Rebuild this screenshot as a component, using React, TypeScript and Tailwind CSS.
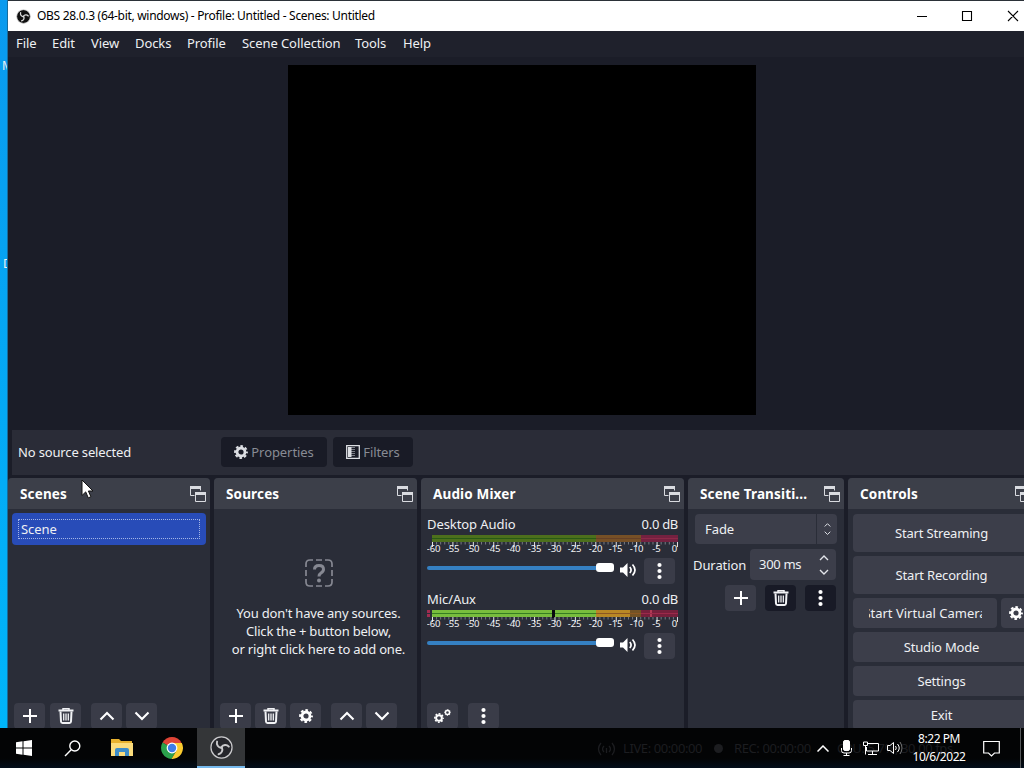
import type { ReactNode } from 'react';

const menuItems = [
  { label: 'File', className: 'w-9' },
  { label: 'Edit', className: 'w-[39px]' },
  { label: 'View', className: 'w-11' },
  { label: 'Docks', className: 'w-[52px]' },
  { label: 'Profile', className: 'w-[55px]' },
  { label: 'Scene Collection', className: 'w-[113px]' },
  { label: 'Tools', className: 'w-12' },
  { label: 'Help', className: 'w-10' },
];

const meterLabels = [
  { text: '-60', x: 6.5 },
  { text: '-55', x: 25.5 },
  { text: '-50', x: 45.5 },
  { text: '-45', x: 66.5 },
  { text: '-40', x: 86.5 },
  { text: '-35', x: 107.5 },
  { text: '-30', x: 127.5 },
  { text: '-25', x: 147.5 },
  { text: '-20', x: 168.5 },
  { text: '-15', x: 188.5 },
  { text: '-10', x: 209.5 },
  { text: '-5', x: 229.5 },
  { text: '0', x: 247.5 },
];

function ObsLogo({ size, fill, stroke }: { size: number; fill: string; stroke: string }) {
  const arm = 'M12 12.500c-3.500-.6-5.600-3.400-4.600-6.700';
  return (
    <svg width={size} height={size} viewBox="0 0 24 24" fill="none" className="shrink-0">
      <circle cx="12" cy="12" r="11" fill={fill} stroke={stroke} strokeWidth="1.300" />
      <g stroke={stroke} strokeWidth="2" strokeLinecap="round">
        <path d={arm} />
        <path d={arm} transform="rotate(120 12 12)" />
        <path d={arm} transform="rotate(240 12 12)" />
      </g>
    </svg>
  );
}

function PopOutIcon() {
  return (
    <svg width="16" height="16" viewBox="0 0 16 16" fill="none" stroke="#d9dbe0" className="shrink-0">
      <path d="M4.500 9.500H.5v-9h10v4" />
      <path d="M0 1.500h11" strokeWidth="3" />
      <path d="M5.500 6.500h10v9h-10z" />
      <path d="M5 7.500h11" strokeWidth="3" />
    </svg>
  );
}

function PlusIcon() {
  return (
    <svg width="16" height="16" viewBox="0 0 16 16" stroke="#fff" strokeWidth="2">
      <path d="M8 1v14M1 8h14" />
    </svg>
  );
}

function TrashIcon() {
  return (
    <svg width="16" height="16" viewBox="0 0 16 16" fill="none" stroke="#f1f2f5">
      <path d="M.5 2.500h15" strokeWidth="2" />
      <path d="M5 2V.800h6V2" strokeWidth="1.500" />
      <path d="M2.500 3.500l.5 10q.1 1.500 1.500 1.500h7q1.400 0 1.500-1.500l.5-10" strokeWidth="2" />
      <path d="M5.700 5.500v7M8 5.500v7M10.300 5.500v7" strokeWidth="1.300" />
    </svg>
  );
}

function ChevronIcon({ down = false }: { down?: boolean }) {
  return (
    <svg width="16" height="16" viewBox="0 0 16 16" fill="none" stroke="#fff" strokeWidth="2.100">
      <path d={down ? 'M1.500 4.500L8 11l6.500-6.500' : 'M1.500 11.500L8 5l6.500 6.500'} />
    </svg>
  );
}

function SmallChevron({ size, down = false }: { size: number; down?: boolean }) {
  return (
    <svg width={size} height={size * 0.6} viewBox="0 0 10 6" fill="none" stroke="#e2e4e9" strokeWidth="1.400">
      <path d={down ? 'M1 1l4 4 4-4' : 'M1 5l4-4 4 4'} />
    </svg>
  );
}

function DotsIcon() {
  return (
    <svg width="5" height="18" viewBox="0 0 5 18" fill="#fff">
      <circle cx="2.500" cy="3" r="2.100" />
      <circle cx="2.500" cy="9" r="2.100" />
      <circle cx="2.500" cy="15" r="2.100" />
    </svg>
  );
}

function GearIcon({ size = 14, color = '#fff' }: { size?: number; color?: string }) {
  return (
    <svg width={size} height={size} viewBox="0 0 14 14" fill="none" stroke={color} className="shrink-0">
      <circle cx="7" cy="7" r="4" strokeWidth="2.800" />
      <circle cx="7" cy="7" r="5.900" strokeWidth="2" strokeDasharray="2.630 2" strokeDashoffset="1.300" />
    </svg>
  );
}

function SpeakerIcon() {
  return (
    <svg width="17" height="14" viewBox="0 0 17 14" fill="none" stroke="#fff" strokeWidth="1.700">
      <path d="M0 4.500h3L7.500 0v14L3 9.500H0z" fill="#fff" stroke="none" />
      <path d="M9.800 4q2.600 3 0 6M12.500 1.500q5 5.500 0 11" />
    </svg>
  );
}

function ToolButton({ children, dark = false }: { children: ReactNode; dark?: boolean }) {
  return (
    <button
      className={`flex h-[26px] w-[31px] shrink-0 items-center justify-center rounded ${dark ? 'bg-[#181a26]' : 'bg-[#3a3c48]'}`}
    >
      {children}
    </button>
  );
}

function Dock({ title, className, children }: { title: string; className: string; children: ReactNode }) {
  return (
    <section className={`flex h-[250px] shrink-0 flex-col overflow-hidden rounded-t bg-[#2a2d38] ${className}`}>
      <header className="flex h-[31px] shrink-0 items-center justify-between bg-[#3c3f49] pl-3 pr-1 text-[13.500px] font-bold tracking-[0.150px] text-white">
        <span className="whitespace-nowrap">{title}</span>
        <PopOutIcon />
      </header>
      {children}
    </section>
  );
}

function Meter({ active = false }: { active?: boolean }) {
  const ticks = Array.from({ length: 61 }, (_, i) => i);
  return (
    <svg width="253" height="21" viewBox="0 0 253 21" className="block">
      {active ? (
        <>
          <rect x="0" y="1" width="3" height="7" fill="#a02c50" />
          <path d="M0 4.500h3" stroke="#2a2d38" />
          <rect x="5" y="1" width="164" height="7" fill="#78bd3d" />
          <rect x="169" y="1" width="34" height="7" fill="#b98825" />
          <rect x="203" y="1" width="11" height="7" fill="#735225" />
          <rect x="214" y="1" width="37" height="7" fill="#76203c" />
          <rect x="223" y="1" width="2" height="7" fill="#b13a55" />
          <path d="M5 4.500h164" stroke="#367d22" />
          <path d="M169 4.500h45" stroke="#8c5722" />
          <path d="M214 4.500h37" stroke="#9c294a" />
          <rect x="125" y="1" width="3" height="8" fill="#08090e" />
        </>
      ) : (
        <>
          <rect x="5" y="1" width="164" height="7" fill="#4d701c" />
          <rect x="169" y="1" width="45" height="7" fill="#775026" />
          <rect x="214" y="1" width="37" height="7" fill="#742140" />
          <path d="M5 4.500h164" stroke="#285b15" />
          <path d="M169 4.500h45" stroke="#664027" />
          <path d="M214 4.500h37" stroke="#8d2948" />
        </>
      )}
      {ticks.map((i) => {
        const x = 5.5 + i * 4.083;
        return (
          <path key={i} d={i % 5 === 0 ? `M${x} 8v5` : `M${x} 8v2.500`} stroke={i % 5 === 0 ? '#e0e2e6' : '#777a83'} />
        );
      })}
      {meterLabels.map((label) => (
        <text key={label.text} x={label.x} y="17.500" textAnchor="middle" fill="#f1f2f4" className="text-[9.500px]">
          {label.text}
        </text>
      ))}
    </svg>
  );
}

function MixerChannel({ name, active }: { name: string; active?: boolean }) {
  return (
    <div className="h-[75px]">
      <div className="flex h-[17px] items-center justify-between">
        <span>{name}</span>
        <span className="tracking-[-0.300px]">0.0 dB</span>
      </div>
      <div className="pt-[2px]">
        <Meter active={active} />
      </div>
      <div className="mt-[3px] flex items-start">
        <div className="mt-[5px] flex h-[9px] w-[187px] items-center">
          <div className="h-1 w-[169px] rounded-l bg-[#3580c2]" />
          <div className="h-[9px] w-[18px] rounded-[3px] bg-white" />
        </div>
        <div className="ml-[6px] mt-[5px]">
          <SpeakerIcon />
        </div>
        <div className="ml-[7px]">
          <ToolButton>
            <DotsIcon />
          </ToolButton>
        </div>
      </div>
    </div>
  );
}

function ControlButton({ children, className }: { children: ReactNode; className: string }) {
  return (
    <button className={`flex shrink-0 items-center justify-center rounded bg-[#3c3e4a] ${className}`}>{children}</button>
  );
}

function TitleBar() {
  return (
    <div className="flex h-[30px] items-center bg-white text-black">
      <div className="flex flex-1 items-center gap-[6px] pl-2">
        <ObsLogo size={15} fill="#111" stroke="#ddd" />
        <span className="whitespace-nowrap text-[12px] tracking-[-0.300px]">
          OBS 28.0.3 (64-bit, windows) - Profile: Untitled - Scenes: Untitled
        </span>
      </div>
      <svg width="108" height="12" viewBox="0 0 108 12" fill="none" stroke="#000" strokeWidth="1.100" className="mb-px">
        <path d="M1 6.500h10M46.500 1.500h9v9h-9zM92 1l10 10M102 1L92 11" />
      </svg>
    </div>
  );
}

function Taskbar() {
  return (
    <div className="relative flex h-10 items-center overflow-hidden bg-linear-to-b from-[#030405] from-75% to-[#020d1a] text-white">
      <div className="flex w-12 justify-center">
        <svg width="16" height="16" viewBox="0 0 16 16" fill="#fff">
          <path d="M0 2.200L6.500 1.300v6.200H0zM7.500 1.200L16 0v7.500H7.500zM0 8.500h6.500v6.200L0 13.800zM7.500 8.500H16V16l-8.500-1.200z" />
        </svg>
      </div>
      <div className="flex w-12 justify-center">
        <svg width="17" height="17" viewBox="0 0 17 17" fill="none" stroke="#fff" strokeWidth="1.400">
          <circle cx="10.800" cy="6" r="5" />
          <path d="M7.200 9.800L1 16" />
        </svg>
      </div>
      <div className="flex w-[52px] justify-center">
        <svg width="22" height="20" viewBox="0 0 22 20">
          <path d="M0 1h8l2 2h11v15H0z" fill="#e8b22f" />
          <path d="M0 5h22v13H0z" fill="#fbdc7c" />
          <path d="M4 18v-6q0-2 2-2h10q2 0 2 2v6h-4v-4H8v4z" fill="#3e8dc8" />
        </svg>
      </div>
      <div className="flex w-[49px] justify-center pr-[2px]">
        <svg width="22" height="22" viewBox="0 0 22 22">
          <path d="M11 11L1.500 5.500A11 11 0 0 1 20.500 5.500z" fill="#df4436" />
          <path d="M11 11L1.500 5.500A11 11 0 0 0 10.500 22l5-8.500z" fill="#2ba24c" />
          <path d="M11 6h9.800A11 11 0 0 1 10.500 22l5-8.500z" fill="#fbcb2f" />
          <circle cx="11" cy="11" r="5.400" fill="#fff" />
          <circle cx="11" cy="11" r="4.200" fill="#3f7de8" />
        </svg>
      </div>
      <div className="flex h-10 w-12 items-center justify-center border-b-2 border-[#76b9ed] bg-[#343638]">
        <ObsLogo size={23} fill="#25262b" stroke="#c9c9cb" />
      </div>
      {/* Status bar showing faintly through the translucent taskbar */}
      <div className="absolute left-[597px] top-3 flex items-center whitespace-nowrap text-[13px] leading-[17px] tracking-[-0.400px] text-[#1c1d20]">
        <svg width="19" height="14" viewBox="0 0 19 14" fill="none" stroke="currentColor" strokeWidth="1.300">
          <path d="M4 1q-5 6 0 12M7 4q-3 3 0 6M12 4q3 3 0 6M15 1q5 6 0 12M9.500 6v5" />
        </svg>
        <span className="ml-[7px] w-[91px]">LIVE: 00:00:00</span>
        <span className="size-[9px] rounded-full bg-current" />
        <span className="ml-[11px] w-[103px]">REC: 00:00:00</span>
        <span>CPU: 5.7%, 30.00 fps</span>
      </div>
      <div className="relative ml-auto flex h-full items-center">
        <svg width="12" height="7" viewBox="0 0 12 7" fill="none" stroke="#fff" strokeWidth="1.500">
          <path d="M.5 6.500L6 1l5.500 5.500" />
        </svg>
        <svg width="11" height="16" viewBox="0 0 11 16" fill="none" stroke="#fff" className="ml-3">
          <rect x="2.500" y=".5" width="6" height="10" rx="1.500" fill="#fff" />
          <path d="M.5 8v2.500q0 2.500 2.500 2.500h5q2.500 0 2.500-2.500V8M5.500 13v2.500M2.500 15.500h6" />
        </svg>
        <svg width="16" height="14" viewBox="0 0 16 14" fill="none" stroke="#fff" className="ml-[11px]">
          <path d="M5 2.500h10.500v7.500H3.500V6M9.500 10v3M5 13.500h9M.5 1h4v3.500h-4zM2.500 4.500v9" />
        </svg>
        <svg width="16" height="14" viewBox="0 0 16 14" fill="none" stroke="#fff" className="ml-2">
          <path d="M.5 4.500h2.500L6.500 1.500v11L3 9.500H.5zM8.500 5q1.500 2 0 4M10.500 3q3.500 4 0 8" />
          <path d="M13 1q4 6 0 12" stroke="#777" />
        </svg>
        <div className="ml-2 flex w-[56px] flex-col items-center whitespace-nowrap text-[12px] leading-[18px] tracking-[-0.450px]">
          <span>8:22 PM</span>
          <span>10/6/2022</span>
        </div>
        <svg width="17" height="17" viewBox="0 0 17 17" fill="none" stroke="#fff" strokeWidth="1.200" className="ml-4">
          <path d="M.7 1.500h15.600v11.500h-4.800L8.500 16l-3-3H.7z" />
        </svg>
        <div className="ml-5 mr-[3px] h-full w-px bg-[#55585a]" />
      </div>
    </div>
  );
}

export default function App() {
  return (
    <div className="relative flex h-[768px] w-[1024px] flex-col overflow-hidden font-['Noto_Sans','Open_Sans',sans-serif] text-[13px] leading-[18px] tracking-[-0.080px] text-[#eef0f3]">
      <div className="flex h-[728px]">
        {/* Sliver of desktop with clipped icon labels */}
        <div className="h-full w-2 shrink-0 overflow-hidden border-r border-[#176c9c] bg-linear-to-b from-[#0a9aee] to-[#00b5fa] pt-[58px] text-xs">
          <div className="ml-[2px] h-[198px]">M</div>
          <div className="ml-[3px]">D</div>
        </div>

        <div className="flex w-[1016px] flex-col overflow-hidden bg-[#1b1d28]">
          <div className="h-px bg-[#2b3138]" />
          <TitleBar />
          <nav className="flex h-[26px] items-center bg-[#1f212c] pb-[2px] pl-2">
            {menuItems.map((item) => (
              <span key={item.label} className={`shrink-0 whitespace-nowrap ${item.className}`}>
                {item.label}
              </span>
            ))}
          </nav>

          <div className="h-[373px] pl-[280px] pt-2">
            <div className="h-[350px] w-[468px] bg-black" />
          </div>

          <div className="ml-1 flex h-[45px] shrink-0 items-center bg-[#2a2c37] pb-px pl-[6px]">
            <span className="w-[203px] pb-px tracking-[-0.150px]">No source selected</span>
            <button className="flex h-[30px] w-[106px] items-center justify-center gap-[3px] rounded bg-[#191b26] text-[#888b94]">
              <GearIcon color="#dcdee3" />
              Properties
            </button>
            <button className="ml-[6px] flex h-[30px] w-20 items-center justify-center gap-[3px] rounded bg-[#191b26] text-[#888b94]">
              <svg width="14" height="14" viewBox="0 0 14 14">
                <path d="M.7.700h12.600v12.600H.7z" fill="none" stroke="#dcdee3" strokeWidth="1.300" />
                <path d="M2 2h3.500v10H2z" fill="#dcdee3" />
                <path d="M6 2v10M8 2v10" stroke="#dcdee3" strokeDasharray="1 1" />
              </svg>
              Filters
            </button>
          </div>

          <main className="mt-[3px] flex">
            <Dock title="Scenes" className="w-[202px]">
              <div className="ml-1 mr-[4px] mt-1 h-8 rounded bg-[#284cb8] p-[6px]">
                <div className="flex h-5 items-center border border-dotted border-[#a3b5e6] pl-[2px]">Scene</div>
              </div>
              <div className="mt-auto flex h-[25px] pl-[6px]">
                <ToolButton><PlusIcon /></ToolButton>
                <div className="ml-[5px]"><ToolButton><TrashIcon /></ToolButton></div>
                <div className="ml-[10px]"><ToolButton><ChevronIcon /></ToolButton></div>
                <div className="ml-1"><ToolButton><ChevronIcon down /></ToolButton></div>
              </div>
            </Dock>

            <Dock title="Sources" className="ml-1 w-[203px]">
              <div className="flex flex-col items-center pl-[6px] pt-[50px] text-center">
                <svg width="28" height="28" viewBox="0 0 28 28" fill="none" stroke="#868892" strokeWidth="1.700">
                  <path d="M1 8V5q0-4 4-4h3M11 1h6M20 1h3q4 0 4 4v3M27 11v6M27 20v3q0 4-4 4h-3M17 27h-6M8 27H5q-4 0-4-4v-3M1 17v-6" />
                  <path d="M9.500 10.500q0-4 4.500-4t4.500 3.700q0 2.300-2.500 3.800-2 1.200-2 3.500" strokeWidth="3" />
                  <circle cx="14" cy="21.500" r="2" fill="#868892" stroke="none" />
                </svg>
                <p className="mt-[17px] whitespace-nowrap tracking-[-0.200px]">
                  You don't have any sources.
                  <br />
                  Click the + button below,
                  <br />
                  or right click here to add one.
                </p>
              </div>
              <div className="mt-auto flex h-[25px] pl-[6px]">
                <ToolButton><PlusIcon /></ToolButton>
                <div className="ml-1"><ToolButton><TrashIcon /></ToolButton></div>
                <div className="ml-1"><ToolButton><GearIcon /></ToolButton></div>
                <div className="ml-[10px]"><ToolButton><ChevronIcon /></ToolButton></div>
                <div className="ml-1"><ToolButton><ChevronIcon down /></ToolButton></div>
              </div>
            </Dock>

            <Dock title="Audio Mixer" className="ml-1 w-[263px]">
              <div className="ml-[6px] w-[251px] pt-[6px]">
                <MixerChannel name="Desktop Audio" />
                <MixerChannel name="Mic/Aux" active />
              </div>
              <div className="mt-auto flex h-[25px] gap-[10px] pl-[6px]">
                <ToolButton>
                  <span className="flex items-start">
                    <span className="mt-1"><GearIcon size={10} /></span>
                    <GearIcon size={7} />
                  </span>
                </ToolButton>
                <ToolButton><DotsIcon /></ToolButton>
              </div>
            </Dock>

            <Dock title="Scene Transiti..." className="ml-1 w-[156px]">
              <div className="ml-[7px] mt-[5px] flex h-[30px] w-[142px] gap-px">
                <div className="flex flex-1 items-center rounded-l bg-[#3c3e4a] pl-[10px]">Fade</div>
                <div className="flex w-5 flex-col items-center justify-center gap-1 rounded-r bg-[#3c3e4a]">
                  <SmallChevron size={7} />
                  <SmallChevron size={7} down />
                </div>
              </div>
              <div className="ml-[5px] mt-[5px] flex h-[31px] w-[143px] items-center justify-between">
                <span>Duration</span>
                <div className="flex h-[31px] w-[86px] items-center justify-between rounded bg-[#3c3e4a] pl-[9px] pr-[7px]">
                  <span className="whitespace-nowrap pb-[2px] tracking-[-0.300px]">300 ms</span>
                  <div className="flex flex-col gap-2">
                    <SmallChevron size={10} />
                    <SmallChevron size={10} down />
                  </div>
                </div>
              </div>
              <div className="mt-[5px] flex gap-[9px] pl-[37px]">
                <ToolButton><PlusIcon /></ToolButton>
                <ToolButton dark><TrashIcon /></ToolButton>
                <ToolButton dark><DotsIcon /></ToolButton>
              </div>
            </Dock>

            <Dock title="Controls" className="ml-1 w-[187px]">
              <div className="flex shrink-0 flex-col gap-1 pl-[5px] pt-[5px] tracking-[-0.180px]">
                <ControlButton className="h-[38px] w-[177px]">Start Streaming</ControlButton>
                <ControlButton className="h-[38px] w-[177px]">Start Recording</ControlButton>
                <div className="flex gap-1">
                  <ControlButton className="h-[30px] w-36">
                    <span className="flex w-[113px] justify-center overflow-hidden whitespace-nowrap tracking-normal">
                      Start Virtual Camera
                    </span>
                  </ControlButton>
                  <ControlButton className="h-[30px] w-[30px]"><GearIcon /></ControlButton>
                </div>
                <ControlButton className="h-[30px] w-[177px]">Studio Mode</ControlButton>
                <ControlButton className="h-[30px] w-[177px]">Settings</ControlButton>
                <ControlButton className="h-[30px] w-[177px]">Exit</ControlButton>
              </div>
            </Dock>
          </main>
        </div>
      </div>

      <Taskbar />

      <svg width="13" height="20" viewBox="0 0 13 20" className="absolute left-[81px] top-[479px]">
        <path d="M1 1v15.500l3.700-3.600 2.600 6 2.600-1.200-2.500-5.700H12z" fill="#fff" stroke="#111" />
      </svg>
    </div>
  );
}
